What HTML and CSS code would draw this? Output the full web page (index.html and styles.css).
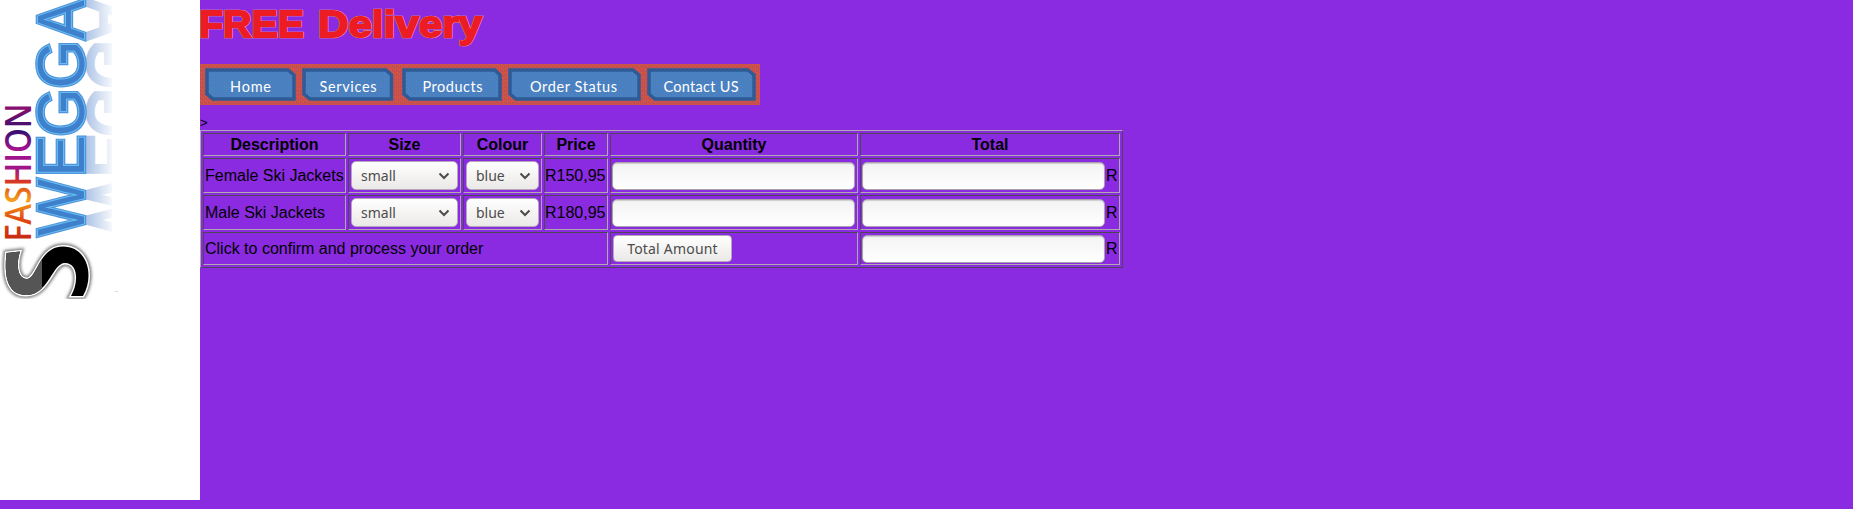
FILE: index.html
```
<!DOCTYPE html>
<html lang="en">
<head>
<meta charset="utf-8">
<title>Swegga Fashion</title>
<link rel="stylesheet" href="styles.css">
</head>
<body>
<div class="page">
<aside class="side">
<svg class="logo" width="120" height="310" viewBox="0 0 120 310" role="img" aria-label="Swegga Fashion">
<defs>
<linearGradient id="fire" x1="0" x2="1" y1="0" y2="0"><stop offset="0" stop-color="#c42312"/><stop offset=".16" stop-color="#e04a10"/><stop offset=".3" stop-color="#f5a11d"/><stop offset=".43" stop-color="#d93820"/><stop offset=".53" stop-color="#a0158a"/><stop offset=".67" stop-color="#a31390"/><stop offset=".8" stop-color="#35106e"/><stop offset="1" stop-color="#97106f"/></linearGradient>
<linearGradient id="fade" gradientUnits="userSpaceOnUse" x1="86" x2="112" y1="0" y2="0"><stop offset="0" stop-color="#fff" stop-opacity=".1"/><stop offset="1" stop-color="#fff" stop-opacity=".9"/></linearGradient>
<filter id="soft" x="-20%" y="-20%" width="140%" height="140%"><feGaussianBlur stdDeviation="1.6"/></filter>
<clipPath id="left"><path d="M0 240h42v65H0z"/></clipPath>
<g id="word">
<text x="2" y="-2" textLength="57" lengthAdjust="spacingAndGlyphs">W</text>
<text x="61" y="-2" textLength="42" lengthAdjust="spacingAndGlyphs">E</text>
<text x="101.500" y="-2" textLength="48" lengthAdjust="spacingAndGlyphs">G</text>
<text x="149.500" y="-2" textLength="48" lengthAdjust="spacingAndGlyphs">G</text>
<text x="199" y="-2" textLength="39" lengthAdjust="spacingAndGlyphs">A</text>
</g>
<path id="ess" d="M6.500 253 20 251.500C16 264 17 279 27 279 37 279 39 246.500 63 246.500 87 246.500 95 275 83 296L71 296C79 282 78 263 65 263 52 263 49 295 26 295 7 295 4 275 6.500 253Z"/>
</defs>
<g class="mirror" transform="translate(86 238) rotate(-90) scale(1 -1)"><use href="#word"/></g>
<path d="M86 0h34v242H86z" fill="url(#fade)"/>
<path d="M112 0h8v242h-8z" fill="#fff"/>
<g transform="translate(86 238) rotate(-90)"><use class="edge" href="#word"/><use class="shine" href="#word"/><use class="core" href="#word"/></g>
<text class="fashion" transform="translate(31 241.500) rotate(-90)" textLength="138" lengthAdjust="spacingAndGlyphs" fill="url(#fire)">FASHION</text>
<use href="#ess" fill="#777" stroke="#777" stroke-width="6" filter="url(#soft)"/>
<use href="#ess" fill="#000" stroke="#fff" stroke-width="3"/>
<use href="#ess" fill="#000"/>
<use href="#ess" fill="#555" clip-path="url(#left)"/>
<path d="M0 299h110v11H0z" fill="#fff"/>
<path d="M115 291h3v1h-3z" fill="#ddd"/>
</svg>
</aside>
<main class="main">
<svg class="headline" width="300" height="64" viewBox="0 0 300 64"><g class="free fringe"><text x="-1" y="37" textLength="105" lengthAdjust="spacingAndGlyphs">FREE</text><text x="118" y="37" textLength="164" lengthAdjust="spacingAndGlyphs">Delivery</text></g><g class="free" aria-hidden="true"><text x="-1" y="37" textLength="105" lengthAdjust="spacingAndGlyphs">FREE</text><text x="118" y="37" textLength="164" lengthAdjust="spacingAndGlyphs">Delivery</text></g></svg>
<svg class="nav" width="560" height="41" viewBox="0 0 560 41">
<defs>
<pattern id="brick" width="4" height="4" patternUnits="userSpaceOnUse"><path fill="#c9524b" d="M0 0h4v4H0z"/><path fill="#d75c35" d="M1 0h1v1H1zM3 2h1v1H3z"/><path fill="#b94469" d="M0 2h1v1H0zM2 3h1v1H2z"/></pattern>
<pattern id="steel" width="4" height="4" patternUnits="userSpaceOnUse"><path fill="#4b80c0" d="M0 0h4v4H0z"/><path fill="#3c83b8" d="M1 0h1v1H1zM3 2h1v1H3z"/><path fill="#5b82cc" d="M0 1h1v1H0zM2 3h1v1H2z"/></pattern>
</defs>
<path fill="url(#brick)" d="M0 0h560v41H0z"/>
<g class="tabs">
<path d="M7 6H88L94 11V35H13L7 30Z"/>
<path d="M104 6H186L191.500 11V35H110L104 30Z"/>
<path d="M204 6H295L300 11V35H210L204 30Z"/>
<path d="M310 6H433L439 11V35H316L310 30Z"/>
<path d="M449 6H548L554 11V35H455L449 30Z"/>
</g>
<g class="labels">
<text x="30" y="27.500" textLength="41">Home</text>
<text x="119.500" y="27.500" textLength="57">Services</text>
<text x="222.500" y="27.500" textLength="60">Products</text>
<text x="330" y="27.500" textLength="87">Order Status</text>
<text x="463.500" y="27.500" textLength="75">Contact US</text>
</g>
</svg>
<div class="stray">&gt;</div>
<table class="order">
<colgroup><col class="c1"><col class="c2"><col class="c3"><col class="c4"><col class="c5"><col class="c6"></colgroup>
<tr class="head"><th>Description</th><th>Size</th><th>Colour</th><th>Price</th><th>Quantity</th><th>Total</th></tr>
<tr class="item"><td>Female Ski Jackets</td>
<td><div class="select wide">small<svg width="12" height="8"><path d="M1.500 1.500 6 6l4.500-4.500"/></svg></div></td>
<td><div class="select">blue<svg width="12" height="8"><path d="M1.500 1.500 6 6l4.500-4.500"/></svg></div></td>
<td class="price">R150,95</td><td><input class="field" type="text"></td><td><div class="sum"><input class="field" type="text">R</div></td></tr>
<tr class="item"><td>Male Ski Jackets</td>
<td><div class="select wide">small<svg width="12" height="8"><path d="M1.500 1.500 6 6l4.500-4.500"/></svg></div></td>
<td><div class="select">blue<svg width="12" height="8"><path d="M1.500 1.500 6 6l4.500-4.500"/></svg></div></td>
<td class="price">R180,95</td><td><input class="field" type="text"></td><td><div class="sum"><input class="field" type="text">R</div></td></tr>
<tr class="confirm"><td colspan="4">Click to confirm and process your order</td><td><button class="btn" type="button">Total Amount</button></td><td><div class="sum"><input class="field" type="text">R</div></td></tr>
</table>
</main>
</div>
</body>
</html>
```
FILE: styles.css
```
body { margin: 0; background: #8a2be2; color: #000; font: 16px/18px "Liberation Sans", Arial, sans-serif; overflow: hidden; }
.page { display: flex; height: 509px; }
.side { width: 200px; height: 500px; background: #fff; flex: none; }
.side svg, .main > svg { display: block; }
.logo text { font: 400 67px "Liberation Sans", sans-serif; }
.logo .fashion { font: 600 36px "Open Sans", sans-serif; }
.mirror { fill: #a3bde3; stroke: #a3bde3; stroke-width: 4; }
.edge { fill: #4a8ad2; stroke: #4f94dc; stroke-width: 4.6; }
.shine { fill: none; stroke: #68bdf0; stroke-width: 2.2; }
.core { fill: #3f80cc; }
.main { flex: 1; }
.free text { font: 700 37px "Liberation Sans", sans-serif; fill: #ed1c24; stroke: #ed1c24; stroke-width: 1.8; }
.free.fringe text { fill: #e9a88c; stroke: #e9a88c; stroke-width: 2.4; }
.tabs path { fill: url(#steel); stroke: #2e5b96; stroke-width: 3.5; }
.labels text { font: 400 14.5px Lato, "Open Sans", sans-serif; fill: #fff; }
.stray { height: 25px; padding-top: 10px; box-sizing: border-box; font-size: 13px; line-height: 15px; }
.order { width: 923px; table-layout: fixed; border: 1px solid; border-color: #b0a8ae #4e4655 #4e4655 #b0a8ae; border-collapse: separate; border-spacing: 2px; }
.order th, .order td { padding: 1px; border: 1px solid; border-color: #4e4655 #b0a8ae #b0a8ae #4e4655; box-sizing: border-box; white-space: nowrap; vertical-align: middle; }
.order .price { padding: 1px 0; }
.c1 { width: 143px; } .c2 { width: 113px; } .c3 { width: 79px; } .c4 { width: 64px; } .c5 { width: 248px; } .c6 { width: 260px; }
.head th { height: 23px; }
.item td { height: 35px; }
.confirm td { height: 33px; }
.select { display: flex; align-items: center; justify-content: space-between; box-sizing: border-box; width: 73px; height: 29px; margin-left: 1px; padding: 0 7px 0 9px; border: 1px solid #b4a9b8; border-radius: 5px; background: linear-gradient(#fff, #ebe9e7); color: #4c4c4c; font: 14px "Noto Sans", sans-serif; }
.select.wide { width: 107px; }
.select svg { fill: none; stroke: #4c4c4c; stroke-width: 2; }
.field { display: block; box-sizing: border-box; width: 243px; height: 28px; margin: 0; padding: 0 4px; border: 1px solid #aaa3ad; border-radius: 5px; background: linear-gradient(#f3f3f3, #fff); box-shadow: inset 0 1px 1px #ccc; }
.sum { display: flex; align-items: center; gap: 1px; }
.btn { display: block; box-sizing: border-box; width: 119px; height: 27px; margin: 0 0 0 1px; padding: 0; border: 1px solid #b4a9b8; border-radius: 4px; background: linear-gradient(#fff, #ebe9e7); color: #4c4c4c; font: 14px "Noto Sans", sans-serif; letter-spacing: .2px; }
```
